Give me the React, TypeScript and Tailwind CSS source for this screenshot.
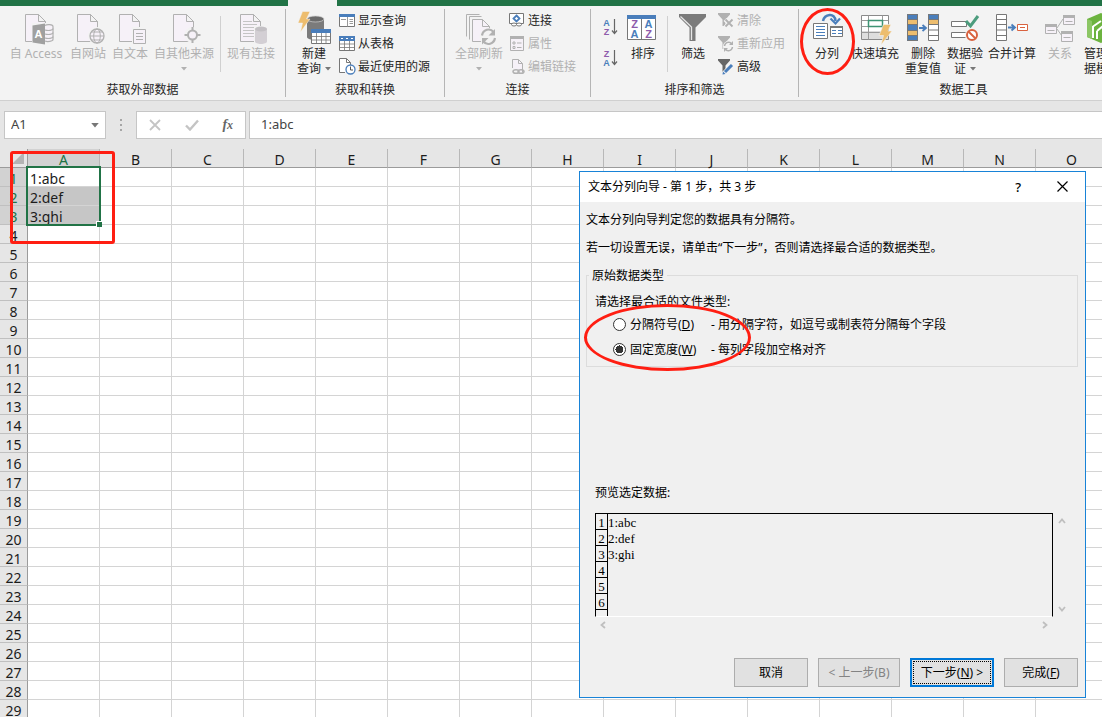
import type { ReactNode } from 'react';
import clsx from 'clsx';

const columns = 'ABCDEFGHIJKLMNO'.split('');
const rows = Array.from({ length: 29 }, (_, i) => i + 1);
const data = ['1:abc', '2:def', '3:ghi'];

const GRAY = '#b1b1b1';
const DARK = '#777777';
const BLUE = '#4a7ebb';
const PALE = '#f6f1f8';

/* ---------- icons ---------- */

function Icon({ children }: { children: ReactNode }) {
  return (
    <svg viewBox="0 0 32 32" className="mb-px h-8 w-8 shrink-0 overflow-visible" fill="none" aria-hidden="true">
      {children}
    </svg>
  );
}

function SmallIcon({ children }: { children: ReactNode }) {
  return (
    <svg viewBox="0 0 16 16" className="h-4 w-4 shrink-0 overflow-visible" fill="none" aria-hidden="true">
      {children}
    </svg>
  );
}

function Page() {
  return (
    <>
      <path d="M5.5 28.5V1.5h13l7 7v20z" fill={PALE} stroke={GRAY} />
      <path d="M18.5 1.5v7h7z" fill="#f3f3f3" stroke={GRAY} />
    </>
  );
}

function AccessIcon() {
  return (
    <Icon>
      <Page />
      <path d="M12 10h21v22H12z" fill="#f3f3f3" />
      <path d="M25 12.500c2-1.500 8-1 8 1v13c0 2-6 2.500-8 1.500" fill={PALE} stroke={GRAY} strokeWidth="1.200" />
      <path d="M25 17c3 1 8 .5 8-1.500M25 21c3 1 8 .5 8-1.500M25 25c3 1 8 .5 8-1.500" stroke={GRAY} strokeWidth="1.200" />
      <path d="M12.500 12.500l12.500-2v21l-12.500-2z" fill="#a0a0a0" />
      <text x="14.500" y="25" fontSize="11" fontWeight="700" fill="#fff" fontFamily="Liberation Sans, sans-serif">
        A
      </text>
    </Icon>
  );
}

function WebIcon() {
  return (
    <Icon>
      <Page />
      <circle cx="25" cy="23" r="9" fill="#f3f3f3" />
      <circle cx="25" cy="23" r="7" fill={PALE} stroke={GRAY} strokeWidth="1.3" />
      <ellipse cx="25" cy="23" rx="3.300" ry="7" stroke={GRAY} />
      <path d="M18 23h14M19.500 19h11M19.500 27h11" stroke={GRAY} />
    </Icon>
  );
}

function TextIcon() {
  return (
    <Icon>
      <Page />
      <path d="M18 14h14v18H18z" fill="#f3f3f3" />
      <path d="M19.500 16.500h12v14h-12z" fill={PALE} stroke={GRAY} />
      <path d="M22 20.500h7M22 23.500h7M22 26.500h7" stroke={GRAY} />
    </Icon>
  );
}

function OtherSourceIcon() {
  return (
    <Icon>
      <Page />
      <circle cx="24.500" cy="22" r="8" fill="#f3f3f3" />
      <circle cx="24.500" cy="22" r="4.500" fill={PALE} stroke={GRAY} strokeWidth="2" />
      <path d="M24.500 14v4M24.500 26v4M16.500 22h4M28.500 22h4" stroke={GRAY} strokeWidth="2" />
    </Icon>
  );
}

function ExistingIcon() {
  return (
    <Icon>
      <Page />
      <path d="M8 8.500h9M8 11.500h14M8 14.500h11M8 17.500h11M8 20.500h11M8 23.500h11" stroke="#c4c4c4" />
      <path d="M19 13h14v19H19z" fill="#f3f3f3" />
      <path d="M20 16v12.500c0 3.300 12 3.300 12 0V16z" fill="#d3cfd4" />
      <ellipse cx="26" cy="16" rx="6" ry="2.500" fill="#c3c0c4" />
    </Icon>
  );
}

function NewQueryIcon() {
  return (
    <Icon>
      <path d="M9 6v18c0 4 17 4 17 0V6z" fill="#7b7b7b" />
      <ellipse cx="17.500" cy="6" rx="8.500" ry="3" fill="#6b6b6b" stroke="#d0d0d0" strokeWidth=".7" />
      <path d="M4.500-1.500h7.500L8.500 6H12L2.500 19l2-9H0z" fill="#edbd6e" stroke="#f3f3f3" strokeWidth=".5" />
      <path d="M13.500 16.500h19v14h-19z" fill="#fff" stroke={DARK} />
      <path d="M13 16h20v4H13z" fill={BLUE} />
      <path d="M13.500 23.500h19M13.500 27h19M18.500 20v10.500M23.500 20v10.500M28 20v10.500" stroke={DARK} strokeWidth=".8" />
    </Icon>
  );
}

function RefreshAllIcon() {
  return (
    <Icon>
      <path d="M3.500 23.500V1.500h13" stroke={GRAY} />
      <path d="M6.500 26.500V3.500h12" stroke={GRAY} />
      <path d="M9.500 28.500V6.500h10l7 7v15z" fill={PALE} stroke={GRAY} />
      <path d="M19.500 6.500v7h7" stroke={GRAY} />
      <circle cx="25.500" cy="24" r="9" fill="#f3f3f3" />
      <path d="M19 22.500c1-6 8-8 11.500-3.500M32 25c-1 6-8 8-11.500 3.500" stroke={GRAY} strokeWidth="2.200" />
      <path d="M32 16v6.500h-6.500zM19 31.500V25h6.500z" fill={GRAY} />
    </Icon>
  );
}

function SortIcon() {
  return (
    <Icon>
      <path d="M.5 2.500h28v24H.5z" fill="#fff" stroke={DARK} />
      <path d="M0 2h29v4H0z" fill={BLUE} />
      <path d="M14.500 6v20" stroke={DARK} />
      <g fontSize="11" fontWeight="700" textAnchor="middle" fontFamily="Liberation Sans, sans-serif">
        <text x="7.500" y="15" fill="#8e5bab">Z</text>
        <text x="7.500" y="25" fill={BLUE}>A</text>
        <text x="21.500" y="15" fill={BLUE}>A</text>
        <text x="21.500" y="25" fill="#8e5bab">Z</text>
      </g>
    </Icon>
  );
}

function OrderIcon({ top, bottom }: { top: string; bottom: string }) {
  return (
    <svg viewBox="0 0 16 16" className="h-4 w-4 overflow-visible" fill="none" aria-hidden="true">
      <g fontSize="9" fontWeight="700" textAnchor="middle" fontFamily="Liberation Sans, sans-serif">
        <text x="3.500" y="6.500" fill={top === 'A' ? BLUE : '#8e5bab'}>{top}</text>
        <text x="3.500" y="15.500" fill={bottom === 'A' ? BLUE : '#8e5bab'}>{bottom}</text>
      </g>
      <path d="M11.500 0v14.500M9 11.500l2.500 3 2.500-3" stroke="#666" strokeWidth="1.200" />
    </svg>
  );
}

function FilterIcon() {
  return (
    <Icon>
      <path d="M2 1h27v3l-10.500 10.500V28h-6V14.500L2 4z" fill="#7b7b7b" />
      <path d="M3.500 3.500L14.500 14v13" stroke="#e6e6e6" strokeWidth="1.300" />
    </Icon>
  );
}

function SplitIcon() {
  return (
    <Icon>
      <path d="M2.500 10.500h14v15h-14z" fill="#fff" stroke={DARK} />
      <path d="M5 13.500h9M5 16.500h9M5 19.500h9M5 22.500h9" stroke={BLUE} />
      <path d="M19.500 13.500h12v10h-12z" fill="#fff" stroke={DARK} />
      <path d="M19 13h13v2H19z" fill={DARK} />
      <path d="M21 17.500h4M21 20.500h4M27 17.500h4M27 20.500h4" stroke={BLUE} />
      <path d="M12 8c1.500-7 12-9 12.500 0" stroke={BLUE} strokeWidth="2.500" />
      <path d="M19.500 5.500l5 5 4.500-5" stroke={BLUE} strokeWidth="2.200" />
    </Icon>
  );
}

function FlashFillIcon() {
  return (
    <Icon>
      <path d="M2.500 2.500h27v24h-27z" fill="#fff" stroke="#8a8a8a" />
      <path d="M3 18h26v8H3z" fill="#dedede" />
      <path d="M2.500 7.500h27M2.500 13.500h27M2.500 19.500h27M9.500 2.500v24M23.500 2.500v5M23.500 13.500v6" stroke="#9a9a9a" />
      <path d="M9.500 7.500h14v6h-14z" fill="#fff" stroke="#3e9474" strokeWidth="1.500" />
      <path d="M24.500 11.500h7.500l-3 6.500h4L22 32l2.500-9.500H20z" fill="#edbd6e" stroke="#f3f3f3" strokeWidth=".6" />
    </Icon>
  );
}

function RemoveDuplicatesIcon() {
  return (
    <Icon>
      <path d="M0 1h11v27H0zM21 1h11v5H21z" fill={BLUE} />
      <path d="M21.500 11.500h10v16h-10z" fill="#fff" />
      <path d="M0 6.500h11v5H0zM0 17.500h11v5H0zM21 6.500h11v5H21z" fill="#edbd6e" />
      <path d="M.5 1.500h10v26H.5zM21.500 1.500h10v26h-10zM.5 6.500h10M.5 11.500h10M.5 17.500h10M.5 22.500h10M21.500 6.500h10M21.500 11.500h10M21.500 17h10M21.500 22.500h10" stroke={DARK} />
      <path d="M12 15h6M15.500 12l3.500 3-3.500 3" stroke={BLUE} strokeWidth="1.800" />
    </Icon>
  );
}

function ValidationIcon() {
  return (
    <Icon>
      <path d="M2.500 8.500h15v5h-15zM2.500 19.500h15v5h-15z" fill="#fff" stroke={DARK} />
      <path d="M17 8l4.500 5L29 3" stroke="#4c9c7d" strokeWidth="3" />
      <circle cx="23" cy="22" r="7" fill="#f3f3f3" />
      <circle cx="23" cy="22" r="5" fill="#fff" stroke="#d9623f" strokeWidth="2" />
      <path d="M19.500 18.500l7 7" stroke="#d9623f" strokeWidth="2" />
    </Icon>
  );
}

function ConsolidateIcon() {
  return (
    <Icon>
      <path d="M.5 1.500h10v26H.5zM.5 6.500h10M.5 11.500h10M.5 17h10M.5 22.500h10" fill="#fff" stroke={DARK} />
      <path d="M12 14.500h6M15.500 11.500l3.500 3-3.500 3" stroke={BLUE} strokeWidth="1.800" />
      <path d="M21.500 11.500h10v6h-10z" fill="#fff" stroke="#d9623f" />
      <path d="M24 14.500h5" stroke="#d9623f" />
    </Icon>
  );
}

function RelationIcon() {
  return (
    <Icon>
      <path d="M13 15l6-9M13 16l5 7" stroke={GRAY} />
      <path d="M1.500 11.500h11v9h-11zM19.500 2.500h11v9h-11zM17.500 18.500h11v10h-11z" fill={PALE} stroke={GRAY} />
      <path d="M1 11h12v3H1zM19 2h12v3H19zM17 18h12v3H17z" fill={GRAY} />
      <path d="M3.500 17.500h7M21.500 8.500h7M19.500 24.500h7" stroke={GRAY} />
    </Icon>
  );
}

function ManageIcon() {
  return (
    <Icon>
      <path d="M1 6l14-6 14 6v18l-14 6-14-6z" fill="#6cb33f" />
      <path d="M1 6l5 2v18l-5-2z" fill="#8cc665" />
      <path d="M7 13.500L15 8M7 13v12M11 18l6-5M11 18v8" stroke="#fff" strokeWidth="2" />
    </Icon>
  );
}

function FunnelSmall({ color }: { color: string }) {
  return <path d="M0 0h12v1.500L7.500 6.500V13h-3V6.500L0 1.500z" fill={color} />;
}

const smallIcons: Record<string, ReactNode> = {
  show: (
    <SmallIcon>
      <path d="M.5 1.500h15v12H.5z" fill="#fff" stroke={DARK} />
      <path d="M0 1h16v3H0z" fill={BLUE} />
      <path d="M8.500 4v9.500M2 6.500h5M10.500 6.500h3.500M10.500 8.500h3.500M10.500 10.500h3.500" stroke="#999" />
    </SmallIcon>
  ),
  table: (
    <SmallIcon>
      <path d="M.5.5h15v14H.5z" fill="#fff" stroke={DARK} />
      <path d="M0 0h16v5H0z" fill={BLUE} />
      <path d="M2 2.500h2M7 2.500h2M12 2.500h2" stroke="#fff" />
      <path d="M.5 8h15M.5 11.500h15M5.500 5v9.500M10.500 5v9.500" stroke={DARK} strokeWidth=".8" />
    </SmallIcon>
  ),
  recent: (
    <SmallIcon>
      <path d="M6 13.500H.5v-14h7l4 4V6" fill="#fff" stroke={DARK} />
      <path d="M7.500-.5v4h4" stroke={DARK} />
      <circle cx="11.500" cy="10.500" r="4.500" fill="#fff" stroke={BLUE} strokeWidth="1.300" />
      <path d="M11.500 7.500v3.500H14" stroke="#555" />
    </SmallIcon>
  ),
  connect: (
    <SmallIcon>
      <path d="M.5.500h14v10H.5z" fill="#fff" stroke={DARK} />
      <path d="M7.500 2.500l3 3-3 3-3-3z" stroke={BLUE} strokeWidth="1.800" />
      <ellipse cx="5" cy="11.500" rx="2.500" ry="1.500" fill="#fff" stroke={DARK} />
      <ellipse cx="10" cy="11.500" rx="2.500" ry="1.500" fill="#fff" stroke={DARK} />
    </SmallIcon>
  ),
  property: (
    <SmallIcon>
      <path d="M1.500.500h13v14h-13z" fill={PALE} stroke={GRAY} />
      <path d="M1 0h14v3H1z" fill={GRAY} />
      <path d="M4 6h2v2H4zM4 10.500h2v2H4zM8 7h4.500M8 11.500h4.500" stroke={GRAY} />
    </SmallIcon>
  ),
  link: (
    <SmallIcon>
      <path d="M3.500 9V.500h6l4 4v9" fill={PALE} stroke={GRAY} />
      <path d="M9.500.500v4h4" stroke={GRAY} />
      <ellipse cx="7" cy="12.500" rx="3" ry="1.800" stroke={GRAY} strokeWidth="1.500" />
      <ellipse cx="12" cy="12.500" rx="3" ry="1.800" stroke={GRAY} strokeWidth="1.500" />
    </SmallIcon>
  ),
  clear: (
    <SmallIcon>
      <FunnelSmall color={GRAY} />
      <path d="M7 6.500l8 8M15 6.500l-8 8" stroke="#f3f3f3" strokeWidth="4" />
      <path d="M7.500 6.500l7 7M14.500 6.500l-7 7" stroke={GRAY} strokeWidth="1.800" />
    </SmallIcon>
  ),
  reapply: (
    <SmallIcon>
      <FunnelSmall color={GRAY} />
      <circle cx="10.500" cy="10.500" r="5.500" fill="#f3f3f3" />
      <path d="M6.500 10c.5-4 5.500-5 7-2M14.500 11c-.5 4-5.500 5-7 2" stroke={GRAY} strokeWidth="1.500" />
      <path d="M15 5v4h-4zM6 16v-4h4z" fill={GRAY} />
    </SmallIcon>
  ),
  advanced: (
    <SmallIcon>
      <FunnelSmall color="#666666" />
      <path d="M5 15.500l9.500-9.500" stroke="#f3f3f3" strokeWidth="5" />
      <path d="M7 13l7-7" stroke={BLUE} strokeWidth="3" />
      <path d="M4.500 15.500l.5-3 2.500 2.500z" fill={BLUE} />
    </SmallIcon>
  ),
};

function Caret({ className }: { className?: string }) {
  return (
    <svg viewBox="0 0 6 4" className={clsx('inline-block h-1 w-1.5', className)} aria-hidden="true">
      <path d="M0 0h6L3 3.500z" fill="currentColor" />
    </svg>
  );
}

/* ---------- ribbon ---------- */

type BigButtonProps = {
  icon: ReactNode;
  lines: string[];
  width: string;
  caret?: boolean;
  disabled?: boolean;
};

function BigButton({ icon, lines, width, caret, disabled }: BigButtonProps) {
  return (
    <button
      type="button"
      disabled={disabled}
      className={clsx(
        'mt-1 flex shrink-0 flex-col items-center whitespace-nowrap leading-[15px]',
        width,
        disabled ? 'text-[#b1b1b1]' : 'text-[#262626]',
      )}
    >
      {icon}
      {lines.map((line, i) => (
        <span key={line} className="flex items-center gap-1">
          {line}
          {caret && i === lines.length - 1 && i > 0 && <Caret className="text-[#777777]" />}
        </span>
      ))}
      {caret && lines.length === 1 && <Caret className="mt-1.5" />}
    </button>
  );
}

function SmallButton({ icon, label, disabled }: { icon: string; label: string; disabled?: boolean }) {
  return (
    <button
      type="button"
      disabled={disabled}
      className={clsx(
        'flex h-[23px] items-center gap-[3px] whitespace-nowrap',
        disabled ? 'text-[#b1b1b1]' : 'text-[#262626]',
      )}
    >
      {smallIcons[icon]}
      {label}
    </button>
  );
}

function Group({ label, className, children }: { label: string; className: string; children: ReactNode }) {
  return (
    <section
      aria-label={label}
      className={clsx('flex shrink-0 flex-col border-r border-[#b5b5b5]', className)}
    >
      <div className="flex h-[73px] shrink-0 items-start">{children}</div>
      <div className="text-center leading-[15px] text-[#262626]">{label}</div>
    </section>
  );
}

function Divider() {
  return <div className="mt-[7px] h-14 w-px shrink-0 bg-[#d0d0d0]" />;
}

function Ribbon() {
  return (
    <header className="shrink-0">
      <div className="flex h-1.5 bg-[#217346] pl-72">
        <div className="w-[49px] bg-[#f3f3f3]" />
      </div>
      <div className="flex h-[95px] overflow-hidden border-b border-[#d0d0d0] bg-[#f3f3f3] pt-[3px] pb-[3px]">
        <Group label="获取外部数据" className="w-[286px]">
          <div className="flex gap-1.5 pl-2">
            <BigButton icon={<AccessIcon />} lines={['自 Access']} width="w-14" disabled />
            <BigButton icon={<WebIcon />} lines={['自网站']} width="w-9" disabled />
            <BigButton icon={<TextIcon />} lines={['自文本']} width="w-9" disabled />
            <BigButton icon={<OtherSourceIcon />} lines={['自其他来源']} width="w-15" caret disabled />
            <Divider />
            <BigButton icon={<ExistingIcon />} lines={['现有连接']} width="w-12" disabled />
          </div>
        </Group>
        <Group label="获取和转换" className="w-[159px]">
          <div className="flex gap-[5px] pl-2">
            <BigButton icon={<NewQueryIcon />} lines={['新建', '查询']} width="w-10" caret />
            <div>
              <SmallButton icon="show" label="显示查询" />
              <SmallButton icon="table" label="从表格" />
              <SmallButton icon="recent" label="最近使用的源" />
            </div>
          </div>
        </Group>
        <Group label="连接" className="w-[146px]">
          <div className="flex gap-1.5 pl-2.5">
            <BigButton icon={<RefreshAllIcon />} lines={['全部刷新']} width="w-12" caret disabled />
            <div>
              <SmallButton icon="connect" label="连接" />
              <SmallButton icon="property" label="属性" disabled />
              <SmallButton icon="link" label="编辑链接" disabled />
            </div>
          </div>
        </Group>
        <Group label="排序和筛选" className="w-[208px]">
          <div className="flex gap-2 pl-3">
            <div className="flex flex-col gap-[15px] pt-2.5">
              <button type="button" aria-label="升序">
                <OrderIcon top="A" bottom="Z" />
              </button>
              <button type="button" aria-label="降序">
                <OrderIcon top="Z" bottom="A" />
              </button>
            </div>
            <BigButton icon={<SortIcon />} lines={['排序']} width="w-8" />
            <Divider />
            <BigButton icon={<FilterIcon />} lines={['筛选']} width="w-[34px]" />
            <div>
              <SmallButton icon="clear" label="清除" disabled />
              <SmallButton icon="reapply" label="重新应用" disabled />
              <SmallButton icon="advanced" label="高级" />
            </div>
          </div>
        </Group>
        <Group label="数据工具" className="w-[330px]">
          <div className="flex pl-1">
            <BigButton icon={<SplitIcon />} lines={['分列']} width="w-12" />
            <BigButton icon={<FlashFillIcon />} lines={['快速填充']} width="w-12" />
            <BigButton icon={<RemoveDuplicatesIcon />} lines={['删除', '重复值']} width="w-12" />
            <BigButton icon={<ValidationIcon />} lines={['数据验', '证']} width="w-9" caret />
            <div className="w-[5px] shrink-0" />
            <BigButton icon={<ConsolidateIcon />} lines={['合并计算']} width="w-12" />
            <BigButton icon={<RelationIcon />} lines={['关系']} width="w-12" disabled />
            <BigButton icon={<ManageIcon />} lines={['管理数', '据模型']} width="w-9" />
          </div>
        </Group>
      </div>
    </header>
  );
}

/* ---------- formula bar ---------- */

function FormulaBar() {
  return (
    <div className="flex shrink-0 bg-[#e6e6e6] py-2.5 pl-1 text-[13px] text-[#444444]">
      <div className="flex h-7 w-[102px] items-center border border-[#c6c6c6] bg-white pr-1.5 pl-1.5">
        <input aria-label="名称框" defaultValue="A1" className="min-w-0 flex-1 outline-none" />
        <button type="button" aria-label="展开名称框" className="flex">
          <Caret className="h-[5px] w-2 text-[#777777]" />
        </button>
      </div>
      <div className="flex w-[30px] flex-col items-center justify-center gap-[3px]">
        <span className="h-0.5 w-0.5 bg-[#a6a6a6]" />
        <span className="h-0.5 w-0.5 bg-[#a6a6a6]" />
        <span className="h-0.5 w-0.5 bg-[#a6a6a6]" />
      </div>
      <div className="flex h-7 w-[110px] items-center justify-around border border-[#c6c6c6] bg-white">
        <button type="button" aria-label="取消输入">
          <svg viewBox="0 0 12 12" className="h-3 w-3" fill="none" stroke="#c4c4c4" strokeWidth="1.800">
            <path d="M1 1l10 10M11 1L1 11" />
          </svg>
        </button>
        <button type="button" aria-label="输入">
          <svg viewBox="0 0 14 12" className="h-3 w-3.5" fill="none" stroke="#c4c4c4" strokeWidth="2.400">
            <path d="M1 6.500L5 10.500 13 1.500" />
          </svg>
        </button>
        <button
          type="button"
          className="font-['Liberation_Serif',serif] text-sm leading-4 font-bold text-[#666666] italic"
        >
          f<span className="text-xs">x</span>
        </button>
      </div>
      <input
        aria-label="编辑栏"
        defaultValue="1:abc"
        className="ml-[3px] h-7 min-w-0 flex-1 border border-r-0 border-[#c6c6c6] bg-white pb-0.5 pl-[11px] outline-none"
      />
    </div>
  );
}

/* ---------- sheet ---------- */

function Sheet() {
  return (
    <div className="relative min-h-0 flex-1 overflow-hidden bg-white">
      <table className="w-[1108px] table-fixed border-separate border-spacing-0 text-sm leading-[18px] text-[#1c1c1c]">
        <thead>
          <tr className="h-[19px]">
            <th className="w-7 border-r border-b border-[#9b9b9b] bg-[#e6e6e6] p-0">
              <svg viewBox="0 0 12 12" className="ml-auto mr-[3px] h-3 w-3" aria-label="全选">
                <path d="M12 0v12H0z" fill="#b4b4b4" />
              </svg>
            </th>
            {columns.map((col) => (
              <th
                key={col}
                scope="col"
                className={clsx(
                  'h-[19px] w-18 border-r border-b border-r-[#b8b8b8] border-b-[#9b9b9b] p-0 font-normal',
                  col === 'A' ? 'bg-[#d2d2d2] text-[#217346]' : 'bg-[#e6e6e6]',
                )}
              >
                <div className="h-[18px] pt-0.5">{col}</div>
              </th>
            ))}
          </tr>
        </thead>
        <tbody>
          {rows.map((row) => (
            <tr key={row} className="h-[19px]">
              <th
                scope="row"
                className={clsx(
                  'h-[19px] border-r border-b border-r-[#9b9b9b] border-b-[#c0c0c0] p-0 font-normal',
                  row <= data.length ? 'bg-[#d2d2d2] text-[#217346]' : 'bg-[#e6e6e6]',
                )}
              >
                <div className="h-[18px] pt-0.5">{row}</div>
              </th>
              {columns.map((col) => {
                const value = col === 'A' ? data[row - 1] : undefined;
                return (
                  <td
                    key={col}
                    className={clsx(
                      'border-r border-b border-[#d4d4d4] p-0',
                      value && row > 1 && 'bg-[#c6c6c6]',
                    )}
                  >
                    {value && <div className="h-[18px] pt-0.5 pl-0.5">{value}</div>}
                  </td>
                );
              })}
            </tr>
          ))}
        </tbody>
      </table>
      {/* selection frame with its fill handle */}
      <div className="absolute top-[17px] left-[26px] h-[60px] w-[75px] border-2 border-[#217346]">
        <span className="absolute -right-[3px] -bottom-[3px] h-1.5 w-1.5 border-t border-l border-white bg-[#217346]" />
      </div>
    </div>
  );
}

/* ---------- dialog ---------- */

const dialogButton = 'h-[29px] border border-[#adadad] bg-[#e1e1e1] whitespace-nowrap';

function Chevron({ d, label }: { d: string; label: string }) {
  return (
    <button type="button" aria-label={label} className="flex h-4 w-4 items-center justify-center">
      <svg viewBox="0 0 8 8" className="h-2 w-2" fill="none" stroke="#bfbfbf" strokeWidth="1.800">
        <path d={d} />
      </svg>
    </button>
  );
}

function TextWizard() {
  return (
    <div
      role="dialog"
      aria-labelledby="wizard-title"
      className="absolute top-[171px] left-[579px] flex h-[527px] w-[507px] flex-col border border-[#1883d7] bg-[#f0f0f0] leading-4 text-black"
    >
      <div className="flex h-[30px] shrink-0 items-center bg-white pr-[17px] pb-px pl-2">
        <h1 id="wizard-title" className="flex-1">
          文本分列向导 - 第 1 步，共 3 步
        </h1>
        <button type="button" aria-label="帮助" className="mr-9 text-[13px] font-medium">
          ?
        </button>
        <button type="button" aria-label="关闭">
          <svg viewBox="0 0 11 11" className="h-[11px] w-[11px]" fill="none" stroke="#000" strokeWidth="1.200">
            <path d="M.5.500l10 10M10.500.500l-10 10" />
          </svg>
        </button>
      </div>

      <div className="flex flex-1 flex-col pt-2.5 pr-[7px] pb-2.5 pl-1.5">
        <p>文本分列向导判定您的数据具有分隔符。</p>
        <p className="mt-3">若一切设置无误，请单击“下一步”，否则请选择最合适的数据类型。</p>

        <fieldset className="mt-2.5 border border-[#dcdcdc] pb-2 pl-2">
          <legend className="-ml-1.5 px-[3px] pt-0.5">原始数据类型</legend>
          <p className="mt-2.5">请选择最合适的文件类型:</p>
          <label className="mt-1.5 flex items-center pl-[18px]">
            <input
              type="radio"
              name="kind"
              className="h-[13px] w-[13px] appearance-none rounded-full border border-[#333333] bg-white"
            />
            <span className="ml-1 w-[81px] pt-px">
              分隔符号(<u>D</u>)
            </span>
            <span className="pt-px">- 用分隔字符，如逗号或制表符分隔每个字段</span>
          </label>
          <label className="mt-2 flex items-center pl-[18px]">
            <input
              type="radio"
              name="kind"
              defaultChecked
              className="h-[13px] w-[13px] appearance-none rounded-full border border-[#333333] bg-[radial-gradient(#333333_0_4px,#ffffff_4px)]"
            />
            <span className="ml-1 w-[81px] pt-px">
              固定宽度(<u>W</u>)
            </span>
            <span className="pt-px">- 每列字段加空格对齐</span>
          </label>
        </fieldset>

        <p className="mt-auto pl-[9px]">预览选定数据:</p>
        <div className="mt-3 flex pl-[9px]">
          <div className="h-[104px] flex-1 overflow-hidden border border-black border-b-white">
            <table className="border-separate border-spacing-0 font-['Liberation_Serif',serif] text-[13px]">
              <tbody>
                {[1, 2, 3, 4, 5, 6].map((n) => (
                  <tr key={n} className="h-4">
                    <th scope="row" className="w-3 border-r border-b border-black p-0 pt-[3px] font-normal leading-3">
                      {n}
                    </th>
                    <td className="p-0 pt-0.5 leading-[14px]">{data[n - 1]}</td>
                  </tr>
                ))}
                <tr className="h-4">
                  <th className="w-3 border-r border-black p-0" />
                  <td className="p-0" />
                </tr>
              </tbody>
            </table>
          </div>
          <div className="mr-2 flex h-[104px] w-[17px] flex-col items-center justify-between">
            <Chevron d="M1 6l3-3.500L7 6" label="向上滚动" />
            <Chevron d="M1 2l3 3.500L7 2" label="向下滚动" />
          </div>
        </div>
        <div className="mr-[25px] ml-[9px] flex h-4 justify-between">
          <Chevron d="M6 1L2.500 4 6 7" label="向左滚动" />
          <Chevron d="M2 1l3.500 3L2 7" label="向右滚动" />
        </div>

        <div className="mt-[25px] flex justify-end gap-2.5">
          <button type="button" className={clsx(dialogButton, 'w-[74px]')}>
            取消
          </button>
          <button type="button" disabled className={clsx(dialogButton, 'w-[82px] text-[#838383]')}>
            &lt; 上一步(B)
          </button>
          <button type="button" className="h-[29px] w-[84px] border-2 border-[#0078d7] bg-[#e1e1e1] p-px whitespace-nowrap">
            <span className="flex h-full items-center justify-center border border-dotted border-black">
              <span>
                下一步(<u>N</u>) &gt;
              </span>
            </span>
          </button>
          <button type="button" className={clsx(dialogButton, 'w-[74px]')}>
            完成(<u>F</u>)
          </button>
        </div>
      </div>
    </div>
  );
}

export default function App() {
  return (
    <div className="relative flex h-screen flex-col overflow-hidden bg-[#e6e6e6] font-['Noto_Sans','Noto_Sans_CJK_SC',sans-serif] text-xs">
      <Ribbon />
      <FormulaBar />
      <Sheet />
      <TextWizard />

      {/* red marker strokes */}
      <div className="pointer-events-none absolute top-[8px] left-[800px] h-[67px] w-[55px] rounded-[50%] border-[3px] border-[#ff1e12]" />
      <div className="pointer-events-none absolute top-[151px] left-[10px] h-[93px] w-[105px] rounded-[3px] border-[3px] border-[#ff1e12]" />
      <div className="pointer-events-none absolute top-[304px] left-[584px] h-[67px] w-[167px] rounded-[50%] border-[3px] border-[#ff1e12]" />
    </div>
  );
}
